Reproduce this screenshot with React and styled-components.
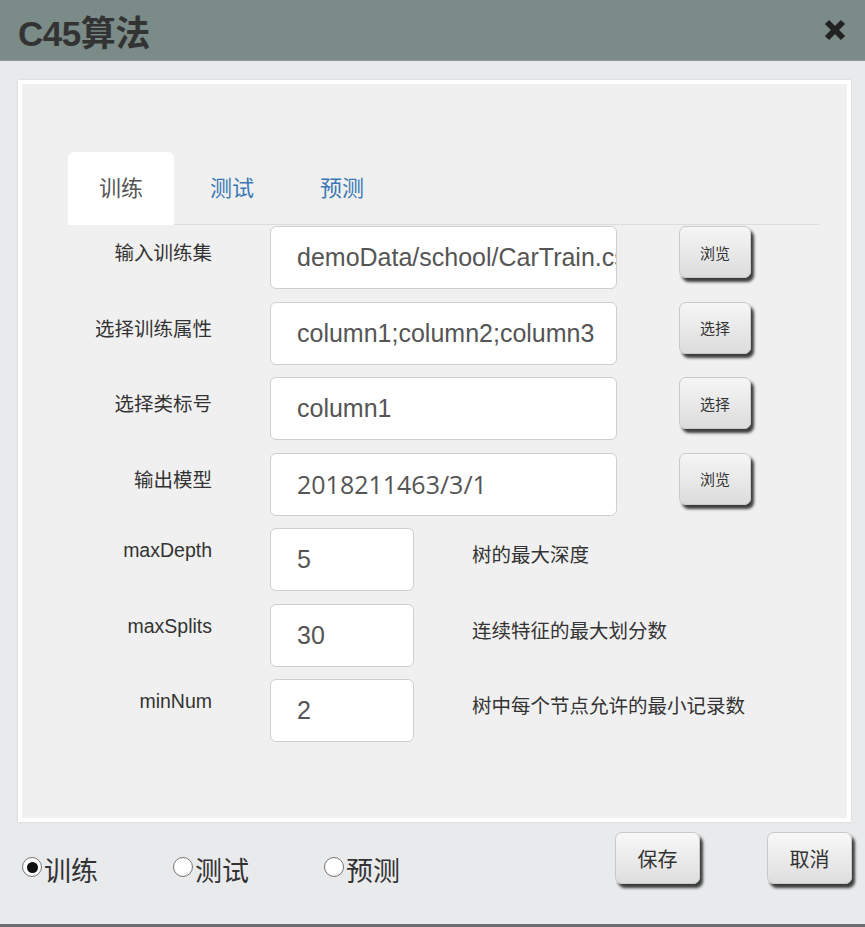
import React, { useState } from 'react';
import styled, { createGlobalStyle } from 'styled-components';

const GlobalStyle = createGlobalStyle`
  html, body {
    margin: 0;
    padding: 0;
    background: #e8eaec;
    font-family: "Liberation Sans", "Noto Sans CJK SC", sans-serif;
  }
`;

const Dialog = styled.div`
  width: 865px;
  height: 927px;
  background: #e8eaec;
  display: flex;
  flex-direction: column;
  box-sizing: border-box;
  border-bottom: 3px solid #6d6f70;
`;

const Header = styled.div`
  height: 60px;
  flex-shrink: 0;
  background: #7a8b88;
  display: flex;
  align-items: center;
  justify-content: space-between;
  padding: 0 16px 0 18px;
  box-shadow: 0 1px 0 #8e9a98;
`;

const Title = styled.h1`
  margin: 0;
  font-size: 35px;
  font-weight: bold;
  color: #333;
  letter-spacing: -0.5px;
  font-family: "Liberation Sans", "Noto Sans CJK SC", sans-serif;
`;

const Close = styled.button`
  border: 0;
  background: none;
  padding: 0;
  width: 28px;
  height: 28px;
  display: flex;
  align-items: center;
  justify-content: center;
  cursor: pointer;
`;

const Panel = styled.div`
  margin: 20px 14px 0 18px;
  height: 742px;
  flex-shrink: 0;
  box-sizing: border-box;
  border: 4px solid #ffffff;
  background: #f0f0f0;
  padding: 67px 28px 0 46px;
  box-shadow: 0 0 2px rgba(0, 0, 0, 0.12);
`;

const Tabs = styled.div`
  display: flex;
  align-items: flex-end;
  border-bottom: 1px solid #dcdcdc;
  height: 73px;
`;

const Tab = styled.div`
  width: ${p => (p.$active ? '106px' : 'auto')};
  height: 73px;
  box-sizing: border-box;
  display: flex;
  align-items: center;
  justify-content: center;
  padding-bottom: 6px;
  font-size: 22px;
  color: ${p => (p.$active ? '#555' : '#3a78b5')};
  background: ${p => (p.$active ? '#fff' : 'transparent')};
  border-radius: 6px 6px 0 0;
  margin-left: ${p => (p.$active ? '0' : '36px')};
  margin-right: ${p => (p.$active ? '0' : '30px')};
  margin-bottom: -1px;
`;

const Form = styled.div`
  display: grid;
  grid-template-columns: 144px 347px 72px;
  column-gap: 58px;
  row-gap: 12.5px;
  margin-top: 1px;
`;

const Label = styled.div`
  font-size: 19.5px;
  color: #333;
  text-align: right;
  align-self: start;
  white-space: nowrap;
  padding-top: 11px;
`;

const Field = styled.input`
  width: ${p => (p.$short ? '144px' : '347px')};
  height: 63px;
  box-sizing: border-box;
  margin: 0;
  background: #fff;
  border: 1px solid #cfcfcf;
  border-radius: 6px;
  padding: 0 0 0 26px;
  font-size: 25px;
  color: #555;
  outline: none;
  font-family: ${p => (p.$open ? '"Open Sans", sans-serif' : '"Liberation Sans", sans-serif')};
`;

const ParamCell = styled.div`
  grid-column: 2 / 4;
  display: flex;
  align-items: flex-start;
  gap: 58px;
`;

const SideButton = styled.button`
  align-self: start;
  margin-left: 4px;
  width: 72px;
  height: 52px;
  border: 1px solid #c9c9c9;
  border-radius: 7px;
  background: linear-gradient(#f6f6f6, #dcdcdc);
  box-shadow: 3px 4px 3px rgba(0, 0, 0, 0.75);
  font-size: 15px;
  color: #333;
  font-family: "Noto Sans CJK SC", sans-serif;
  cursor: pointer;
`;

const Hint = styled.div`
  padding-top: 11px;
  font-size: 19.5px;
  color: #333;
  white-space: nowrap;
`;

const Footer = styled.div`
  display: flex;
  align-items: flex-start;
  padding: 10px 13px 0 22px;
`;

const Radios = styled.div`
  display: flex;
  flex: 1;
  margin-top: 20px;
`;

const Radio = styled.label`
  display: flex;
  align-items: center;
  width: 151px;
  font-size: 27px;
  line-height: 36px;
  color: #333;
  cursor: pointer;
  font-family: "Noto Sans CJK SC", sans-serif;
`;

const Dot = styled.span`
  width: 20px;
  height: 20px;
  box-sizing: border-box;
  border-radius: 50%;
  border: 1px solid #777;
  background: radial-gradient(circle at 50% 40%, #ffffff 55%, #e4e4e4);
  display: inline-flex;
  align-items: center;
  justify-content: center;
  margin: -6px 2px 0 0;
  flex-shrink: 0;

  &::after {
    content: '';
    width: 11px;
    height: 11px;
    border-radius: 50%;
    background: ${p => (p.$on ? '#111' : 'transparent')};
  }
`;

const Actions = styled.div`
  display: flex;
  gap: 67px;
`;

const ActionButton = styled.button`
  width: 85px;
  height: 52px;
  border: 1px solid #c9c9c9;
  border-radius: 7px;
  background: linear-gradient(#f8f8f8, #dedede);
  box-shadow: 3px 4px 3px rgba(0, 0, 0, 0.75);
  font-size: 20px;
  color: #333;
  cursor: pointer;
  font-family: "Noto Sans CJK SC", sans-serif;
`;

const rows = [
  { label: '输入训练集', value: 'demoData/school/CarTrain.csv', btn: '浏览' },
  { label: '选择训练属性', value: 'column1;column2;column3', btn: '选择' },
  { label: '选择类标号', value: 'column1', btn: '选择' },
  { label: '输出模型', value: '2018211463/3/1', btn: '浏览', open: true },
];

const params = [
  { label: 'maxDepth', value: '5', hint: '树的最大深度' },
  { label: 'maxSplits', value: '30', hint: '连续特征的最大划分数' },
  { label: 'minNum', value: '2', hint: '树中每个节点允许的最小记录数' },
];

export default function App() {
  const [mode, setMode] = useState('训练');

  return (
    <>
      <GlobalStyle />
      <Dialog>
        <Header>
          <Title>C45算法</Title>
          <Close aria-label="close">
            <svg width="24" height="24" viewBox="0 0 24 24">
              <path d="M4 4 L20 20 M20 4 L4 20" stroke="#222" strokeWidth="6" />
            </svg>
          </Close>
        </Header>
        <Panel>
          <Tabs>
            <Tab $active>训练</Tab>
            <Tab>测试</Tab>
            <Tab>预测</Tab>
          </Tabs>
          <Form>
            {rows.map(r => (
              <React.Fragment key={r.label}>
                <Label>{r.label}</Label>
                <Field readOnly value={r.value} $open={r.open} />
                <SideButton>{r.btn}</SideButton>
              </React.Fragment>
            ))}
            {params.map(p => (
              <React.Fragment key={p.label}>
                <Label>{p.label}</Label>
                <ParamCell>
                  <Field readOnly value={p.value} $short />
                  <Hint>{p.hint}</Hint>
                </ParamCell>
              </React.Fragment>
            ))}
          </Form>
        </Panel>
        <Footer>
          <Radios>
            {['训练', '测试', '预测'].map(m => (
              <Radio key={m} onClick={() => setMode(m)}>
                <Dot $on={mode === m} />
                {m}
              </Radio>
            ))}
          </Radios>
          <Actions>
            <ActionButton>保存</ActionButton>
            <ActionButton>取消</ActionButton>
          </Actions>
        </Footer>
      </Dialog>
    </>
  );
}
